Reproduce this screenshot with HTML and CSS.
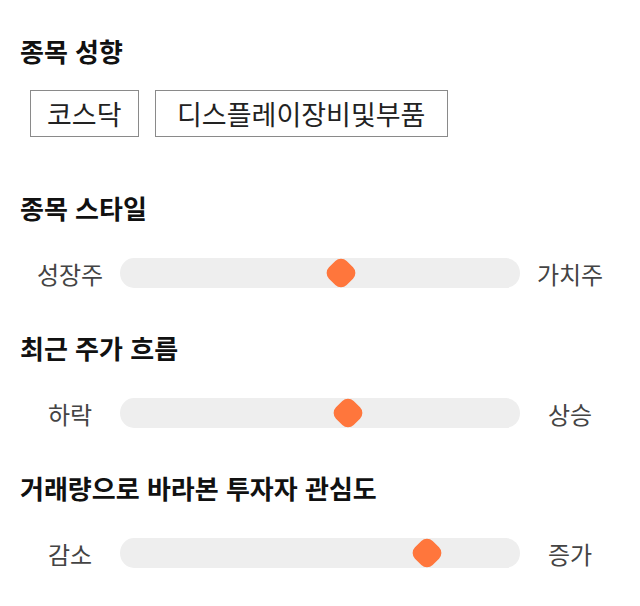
FILE: index.html
```html
<!DOCTYPE html>
<html lang="ko">
<head>
<meta charset="utf-8">
<title>종목 성향</title>
<link rel="stylesheet" href="styles.css">
</head>
<body>
<main class="page">
  <section class="sec sec-tags">
    <h2 class="sec-title">종목 성향</h2>
    <div class="chips">
      <span class="chip chip-short">코스닥</span>
      <span class="chip">디스플레이장비및부품</span>
    </div>
  </section>
  <section class="sec">
    <h2 class="sec-title">종목 스타일</h2>
    <div class="slider-row">
      <span class="end">성장주</span>
      <div class="track"><span class="knob" style="--v:0.558"></span></div>
      <span class="end">가치주</span>
    </div>
  </section>
  <section class="sec">
    <h2 class="sec-title">최근 주가 흐름</h2>
    <div class="slider-row">
      <span class="end">하락</span>
      <div class="track"><span class="knob" style="--v:0.575"></span></div>
      <span class="end">상승</span>
    </div>
  </section>
  <section class="sec">
    <h2 class="sec-title">거래량으로 바라본 투자자 관심도</h2>
    <div class="slider-row">
      <span class="end">감소</span>
      <div class="track"><span class="knob" style="--v:0.79"></span></div>
      <span class="end">증가</span>
    </div>
  </section>
</main>
</body>
</html>
```

FILE: styles.css
```css
html, body {
  margin: 0;
  padding: 0;
  background: #ffffff;
}

body {
  font-family: "Noto Sans CJK KR", "Noto Sans", sans-serif;
  color: #222222;
}

.page {
  display: flex;
  flex-direction: column;
  gap: 42px;
  padding: 36px 20px 0 20px;
  width: 600px;
}

.sec {
  display: flex;
  flex-direction: column;
}

.sec-tags {
  margin-bottom: 14px;
}

.sec-title {
  margin: 0;
  font-size: 26px;
  line-height: 30px;
  font-weight: 700;
  color: #111111;
}

.chips {
  display: flex;
  gap: 16px;
  margin: 24px 0 0 10px;
}

.chip {
  box-sizing: border-box;
  display: inline-flex;
  align-items: center;
  justify-content: center;
  height: 47px;
  padding: 0 21.5px;
  border: 1px solid #8a8a8a;
  font-size: 27px;
  line-height: 1;
  color: #222222;
  white-space: nowrap;
}

.chip-short {
  padding: 0 16px;
}

.slider-row {
  display: grid;
  grid-template-columns: 100px 1fr 100px;
  align-items: center;
  height: 40px;
  margin-top: 28px;
}

.end {
  text-align: center;
  font-size: 24px;
  line-height: 40px;
  color: #444444;
  padding-top: 3px;
}

.track {
  position: relative;
  height: 30px;
  background: #eeeeee;
  border-radius: 14px / 15px;
}

.knob {
  position: absolute;
  top: 50%;
  left: calc(15px + var(--v) * (100% - 30px));
  width: 25px;
  height: 25px;
  border-radius: 8px;
  background: #ff763c;
  transform: translate(-50%, -50%) rotate(45deg);
}
```
